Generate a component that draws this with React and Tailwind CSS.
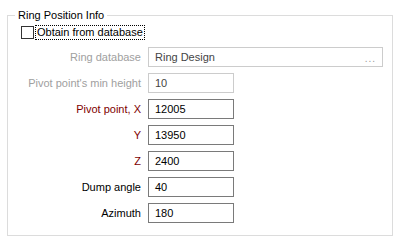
import React from "react";

const rows = [
  { label: "Ring database", value: "Ring Design", tone: "gray", wide: true, disabled: true },
  { label: "Pivot point's min height", value: "10", tone: "gray", disabled: true },
  { label: "Pivot point, X", value: "12005", tone: "red" },
  { label: "Y", value: "13950", tone: "red" },
  { label: "Z", value: "2400", tone: "red" },
  { label: "Dump angle", value: "40", tone: "black" },
  { label: "Azimuth", value: "180", tone: "black" },
];

const toneClass = {
  gray: "text-[#a0a0a0]",
  red: "text-[#800000]",
  black: "text-black",
};

const Row = ({ row }) => (
  <div className="flex items-center h-[20px]">
    <div className={`w-[133px] text-right ${toneClass[row.tone]}`}>{row.label}</div>
    <div
      className={`ml-[7px] h-[20px] flex items-center pl-[6px] pr-[6px] bg-white border ${
        row.disabled ? "border-[#cccccc] text-[#444]" : "border-[#7a7a7a] text-black"
      } ${row.wide ? "w-[235px]" : "w-[86px]"}`}
    >
      <span className="flex-1">{row.value}</span>
      {row.wide && <span className="text-[#999] text-[10px] tracking-[1px] mt-[3px]">...</span>}
    </div>
  </div>
);

const App = () => {
  return (
    <div
      className="w-[401px] h-[246px] bg-white pt-[9px] text-[11px] leading-[13px]"
      style={{ fontFamily: '"Liberation Sans", Arial, sans-serif' }}
    >
      <fieldset className="ml-[7px] w-[386px] h-[227px] border border-[#dcdcdc] px-0">
        <legend className="ml-[7px] px-[3px] text-black">Ring Position Info</legend>

        <div className="flex items-center mt-[4px] ml-[13px] h-[13px]">
          <div className="w-[13px] h-[13px] border border-[#333] bg-white" />
          <span className="ml-[2px] px-[1px] outline outline-1 outline-dotted outline-black h-[13px] leading-[13px]">
            Obtain from database
          </span>
        </div>

        <div className="mt-[8px] flex flex-col gap-[6px]">
          {rows.map((r) => (
            <Row key={r.label} row={r} />
          ))}
        </div>
      </fieldset>
    </div>
  );
};

export default App;
